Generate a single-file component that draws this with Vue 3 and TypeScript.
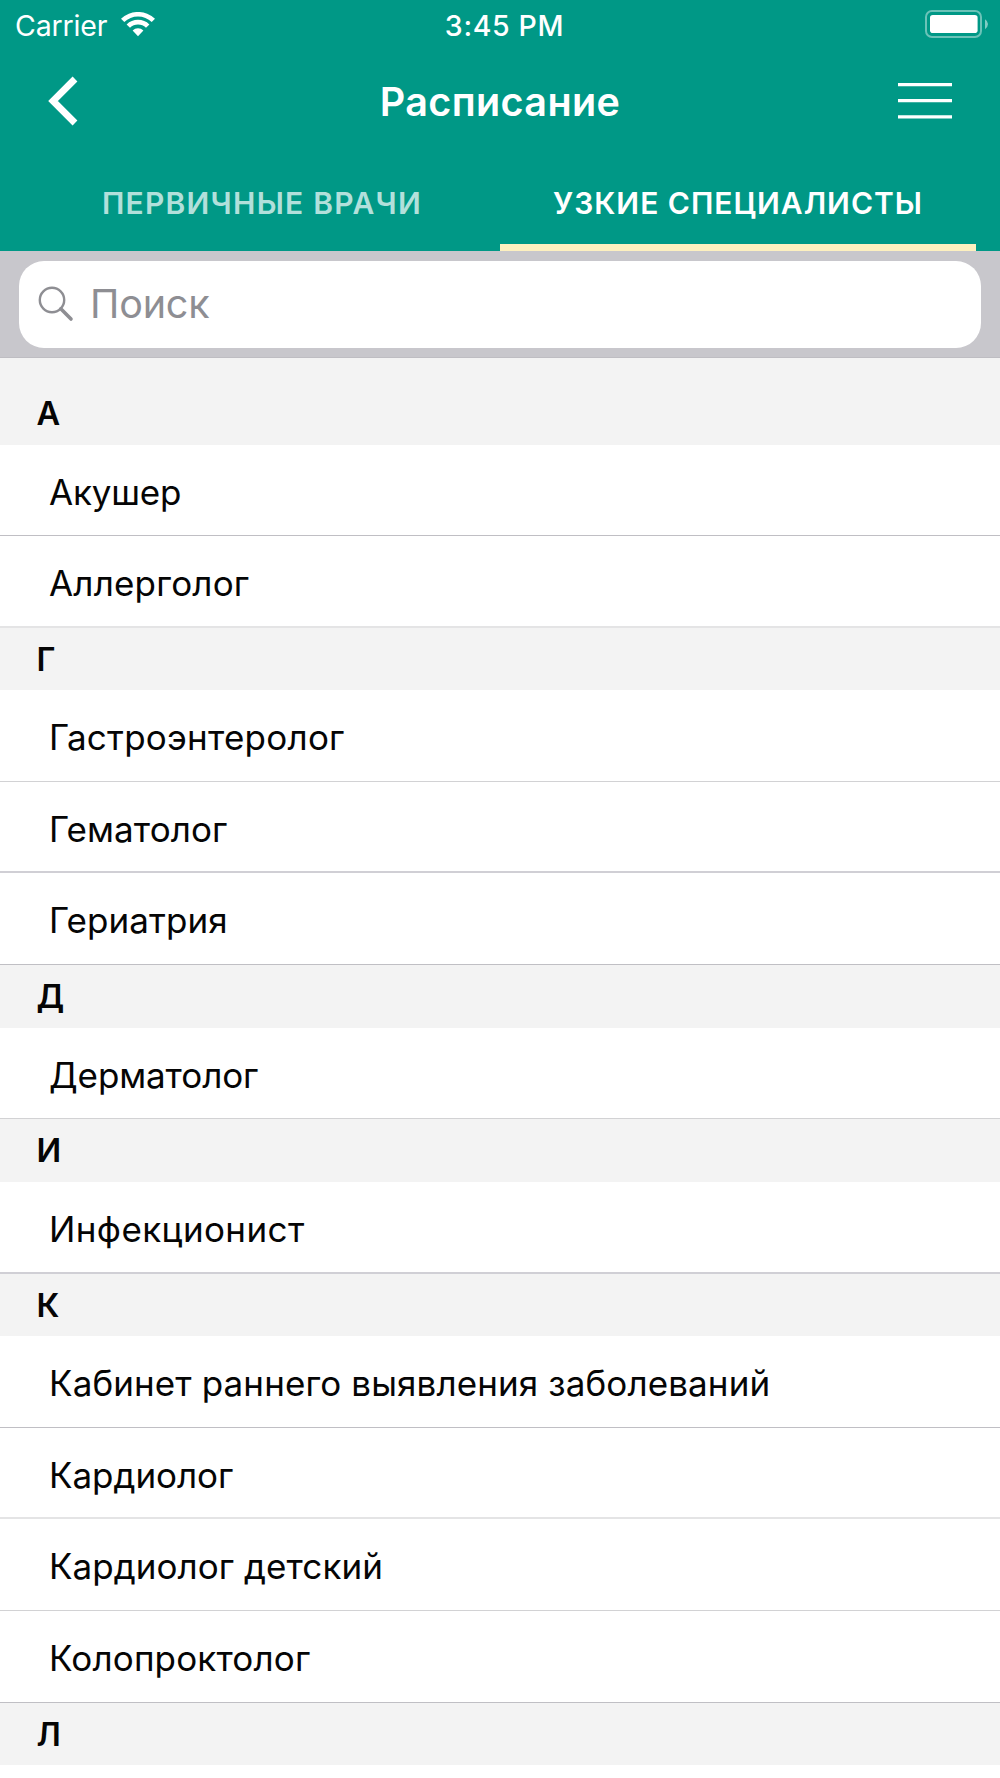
<script setup lang="ts">
type Line = 'strong' | 'thin' | 'wide' | 'soft'

interface Doctor {
  name: string
  line: Line
  // letter spacing of the name, px
  tracking: number
}

interface Section {
  letter: string
  doctors: Doctor[]
}

const sections: Section[] = [
  {
    letter: 'А',
    doctors: [
      { name: 'Акушер', line: 'strong', tracking: -0.2 },
      { name: 'Аллерголог', line: 'soft', tracking: 0.2 },
    ],
  },
  {
    letter: 'Г',
    doctors: [
      { name: 'Гастроэнтеролог', line: 'thin', tracking: 0.24 },
      { name: 'Гематолог', line: 'wide', tracking: 0.08 },
      { name: 'Гериатрия', line: 'strong', tracking: 0.08 },
    ],
  },
  { letter: 'Д', doctors: [{ name: 'Дерматолог', line: 'thin', tracking: -0.1 }] },
  { letter: 'И', doctors: [{ name: 'Инфекционист', line: 'wide', tracking: 0.4 }] },
  {
    letter: 'К',
    doctors: [
      { name: 'Кабинет раннего выявления заболеваний', line: 'strong', tracking: 0.11 },
      { name: 'Кардиолог', line: 'soft', tracking: -0.04 },
      { name: 'Кардиолог детский', line: 'thin', tracking: 0.06 },
      { name: 'Колопроктолог', line: 'strong', tracking: 0.16 },
    ],
  },
  { letter: 'Л', doctors: [] },
]
</script>

<template>
  <div class="screen">
    <header class="top">
      <div class="status">
        <div class="carrier">
          <span class="carrier-name">Carrier</span>
          <svg class="wifi" width="34" height="25" viewBox="0 0 34 25">
            <path d="M0 6.8A24.5 24.5 0 0 1 34 6.8L30.7 10.1A19.6 19.6 0 0 0 3.3 10.1Z" />
            <path d="M5.6 12.4A16.4 16.4 0 0 1 28.4 12.4L25 15.8A11.6 11.6 0 0 0 9 15.8Z" />
            <path d="M11.6 18.4A7.8 7.8 0 0 1 22.4 18.4L17 24.2Z" />
          </svg>
        </div>
        <span class="time">3:45 PM</span>
        <svg class="battery" width="64" height="28" viewBox="0 0 64 28">
          <rect x="1" y="1" width="55" height="26" rx="6" fill="none" stroke="#fff" stroke-opacity=".42" stroke-width="2" />
          <rect x="5" y="5" width="47.6" height="18" rx="2.8" fill="#fff" />
          <path d="M60 9.2Q63 11 63 14T60 19.2Z" fill="#fff" fill-opacity=".5" />
        </svg>
      </div>
      <nav class="bar">
        <svg class="back" width="30" height="50" viewBox="0 0 30 50">
          <path d="M27 3L5 25L27 47" fill="none" stroke="#fff" stroke-width="6.8" />
        </svg>
        <h1 class="title">Расписание</h1>
        <svg class="menu" width="54" height="36" viewBox="0 0 54 36">
          <path d="M0 1.6H54M0 17.7H54M0 33.8H54" fill="none" stroke="#fff" stroke-width="3.2" />
        </svg>
      </nav>
      <div class="tabs">
        <div class="tab"><span>ПЕРВИЧНЫЕ ВРАЧИ</span></div>
        <div class="tab active"><span>УЗКИЕ СПЕЦИАЛИСТЫ</span></div>
      </div>
    </header>
    <div class="search">
      <div class="field">
        <svg class="lens" width="36" height="36" viewBox="0 0 36 36">
          <circle cx="14" cy="14" r="12.2" fill="none" stroke="#8e8e93" stroke-width="2.4" />
          <path d="M22.8 22.8L33 33" fill="none" stroke="#8e8e93" stroke-width="3.6" stroke-linecap="round" />
        </svg>
        <span class="placeholder">Поиск</span>
      </div>
    </div>
    <main class="list">
      <section v-for="section in sections" :key="section.letter">
        <h2 class="letter">{{ section.letter }}</h2>
        <div
          v-for="doctor in section.doctors"
          :key="doctor.name"
          class="row"
          :class="doctor.line"
          :style="{ letterSpacing: doctor.tracking + 'px' }"
        >
          {{ doctor.name }}
        </div>
      </section>
    </main>
  </div>
</template>

<style>
body {
  margin: 0;
  background: #fff;
}
</style>

<style scoped>
.screen {
  width: 1000px;
  height: 1778px;
  overflow: hidden;
  background: #fff;
  color: #050505;
  font-family: Inter, 'Liberation Sans', sans-serif;
}
.top {
  height: 251px;
  background: #009886;
  color: #fff;
}
.status {
  display: grid;
  grid-template-columns: 1fr auto 1fr;
  align-items: center;
  height: 50px;
  box-sizing: border-box;
  padding: 0 11px 0 15px;
}
.carrier {
  display: flex;
  align-items: center;
  gap: 14px;
}
.carrier-name {
  font-size: 28.5px;
  line-height: 51px;
  letter-spacing: -0.15px;
}
.wifi {
  fill: #fff;
  margin-bottom: 2px;
}
.time {
  padding-left: 5px;
  font-size: 28.5px;
  font-weight: 500;
  line-height: 51px;
  letter-spacing: 0.65px;
}
.battery {
  justify-self: end;
  margin-bottom: 3px;
}
.bar {
  display: flex;
  justify-content: space-between;
  align-items: center;
  height: 102px;
  padding: 0 48px;
}
.back {
  margin-right: 24px;
}
.title {
  margin: 0;
  font-size: 39.5px;
  font-weight: 600;
  line-height: 102px;
  letter-spacing: 0.4px;
  padding-top: 2px;
}
.tabs {
  display: flex;
  height: 99px;
  padding: 0 24px;
}
.tab {
  flex: 1;
  display: flex;
  justify-content: center;
  box-sizing: border-box;
  font-size: 30px;
  font-weight: 600;
  line-height: 102px;
  letter-spacing: 1.25px;
  white-space: nowrap;
  color: #b2e0db;
}
.active {
  color: #fff;
  border-bottom: 7px solid #fdf0c0;
  letter-spacing: 1px;
}
.search {
  height: 107px;
  box-sizing: border-box;
  padding: 10px 19px 0;
  background: #c8c7cc;
  border-bottom: 1px solid #bebdc2;
}
.field {
  display: flex;
  align-items: center;
  height: 87px;
  box-sizing: border-box;
  padding-left: 19px;
  border-radius: 25px;
  background: #fff;
}
.lens {
  margin-right: 16px;
  margin-bottom: 1px;
}
.placeholder {
  padding-bottom: 2px;
  color: #8e8e93;
  font-size: 39.5px;
  letter-spacing: -0.2px;
}
.list section:first-child {
  padding-top: 23.8px;
  background: #f3f3f3;
}
.letter {
  margin: 0;
  height: 62.75px;
  padding-left: 36.4px;
  background: #f3f3f3;
  font-size: 32.5px;
  font-weight: 600;
  line-height: 63.5px;
}
.row {
  height: 91.55px;
  box-sizing: border-box;
  padding-left: 49px;
  border-bottom: 1px solid #c0bfc4;
  background: #fff;
  font-size: 35px;
  line-height: 94px;
  white-space: nowrap;
}
.thin {
  border-bottom-color: #d2d2d4;
}
.wide {
  border-bottom: 2px solid #d0cfd5;
}
.soft {
  border-bottom: 2px solid #e4e4e5;
}
</style>
